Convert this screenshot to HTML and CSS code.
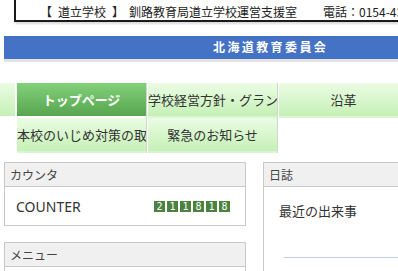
FILE: index.html
```html
<!DOCTYPE html>
<html lang="ja">
<head>
<meta charset="utf-8">
<link rel="stylesheet" href="styles.css">
</head>
<body>
<div class="page">
  <div class="addr"><span class="br">【</span>道立学校<span class="br">】</span>釧路教育局道立学校運営支援室<span class="tel">電話：0154-43-9176</span></div>
  <div class="band"><span class="band-title">北海道教育委員会</span></div>
  <nav class="menu">
    <span class="menu-edge"></span>
    <a class="menu-item active">トップページ</a>
    <a class="menu-item">学校経営方針・グランドデザイン</a>
    <a class="menu-item">沿革</a>
    <a class="menu-item first2">本校のいじめ対策の取組</a>
    <a class="menu-item">緊急のお知らせ</a>
  </nav>
  <div class="cols">
    <div class="side">
      <section class="box">
        <h2 class="box-head">カウンタ</h2>
        <div class="box-body counter">
          <span class="counter-label">COUNTER</span>
          <span class="digits"><span class="d">2</span><span class="d">1</span><span class="d">1</span><span class="d">8</span><span class="d">1</span><span class="d">8</span></span>
        </div>
      </section>
      <section class="box">
        <h2 class="box-head">メニュー</h2>
        <div class="box-body tall"></div>
      </section>
    </div>
    <div class="main">
      <section class="box">
        <h2 class="box-head">日誌</h2>
        <div class="box-body diary">
          <p class="diary-title">最近の出来事</p>
          <div class="diary-rule"></div>
        </div>
      </section>
    </div>
  </div>
</div>
</body>
</html>
```
FILE: styles.css
```css
html, body {
  margin: 0;
  padding: 0;
  background: #fff;
  overflow: hidden;
}
body {
  width: 398px;
  height: 271px;
  font-family: "Noto Sans CJK JP", "Noto Sans", sans-serif;
  color: #333;
}
.page {
  width: 398px;
  overflow: hidden;
}
.addr {
  margin: -10px 0 0 14px;
  width: 600px;
  border: 2px solid #1a1a1a;
  border-right: none;
  padding: 12px 0 0 24px;
  font-size: 12px;
  line-height: 16px;
  height: 16px;
  white-space: nowrap;
  color: #222;
  box-shadow: 1px 2px 2px rgba(0,0,0,0.15);
}
.br {
  display: inline-block;
  width: 12px;
  margin-right: 6px;
  text-align: center;
}
.br + .br, .addr .br:nth-of-type(2) {
  margin: 0 5px 0 6px;
}
.tel {
  margin-left: 26px;
}
.band {
  margin: 14px 0 0 4px;
  height: 23px;
  background: #4472c4;
  border-bottom: 3px solid #e4e4e4;
  display: flex;
  align-items: center;
}
.band-title {
  padding-left: 209px;
  color: #fff;
  font-size: 12px;
  font-weight: bold;
  letter-spacing: 2.4px;
  line-height: 14px;
  margin-top: -2px;
}
.menu {
  margin-top: 21px;
  display: grid;
  grid-template-columns: 15px 129px 129px 129px;
  grid-auto-rows: 35px;
  column-gap: 2px;
  row-gap: 0;
  width: 420px;
}
.menu-edge {
  background: linear-gradient(#ebfde4, #c5f0b6);
  border-bottom: 2px solid #fff;
}
.menu-item {
  display: block;
  overflow: hidden;
  white-space: nowrap;
  text-align: center;
  font-size: 13px;
  line-height: 33px;
  color: #333;
  background: linear-gradient(#ebfde4, #c5f0b6);
  border-bottom: 2px solid #dcf5d2;
  box-shadow: 1px 0 0 #cfd8cc;
}
.menu-item.active {
  background: linear-gradient(#82d07a, #57a64f);
  color: #fff;
  font-weight: bold;
  border-bottom: 2px solid #fff;
}
.first2 {
  grid-column-start: 2;
}
.cols {
  margin-top: 9px;
  display: flex;
  gap: 17px;
  padding-left: 4px;
}
.side {
  width: 242px;
  flex: none;
  display: flex;
  flex-direction: column;
  gap: 16px;
}
.main {
  flex: none;
  width: 200px;
}
.box {
  border: 1px solid #c8c8c8;
  background: #fff;
}
.box-head {
  margin: 0;
  height: 23px;
  background: #f0f0f0;
  border-bottom: 1px solid #c8c8c8;
  font-size: 12px;
  font-weight: normal;
  line-height: 23px;
  padding-left: 5px;
  color: #444;
}
.box-body {
  height: 38px;
}
.counter {
  display: flex;
  align-items: center;
  padding-left: 11px;
}
.counter-label {
  font-family: "Noto Sans", sans-serif;
  font-size: 14px;
  color: #333;
  width: 138px;
}
.digits {
  display: flex;
  gap: 2px;
}
.d {
  width: 11px;
  height: 11px;
  background: #4b8240;
  color: #fff;
  font-family: "DejaVu Sans Mono", monospace;
  font-size: 10px;
  line-height: 11px;
  text-align: center;
}
.tall {
  height: 60px;
}
.diary {
  height: 120px;
  padding: 14px 0 0 15px;
}
.diary-title {
  margin: 0;
  font-size: 13px;
  line-height: 20px;
  color: #333;
}
.diary-rule {
  margin: 36px 0 0 5px;
  height: 1px;
  background: #c5cbe6;
}
```
